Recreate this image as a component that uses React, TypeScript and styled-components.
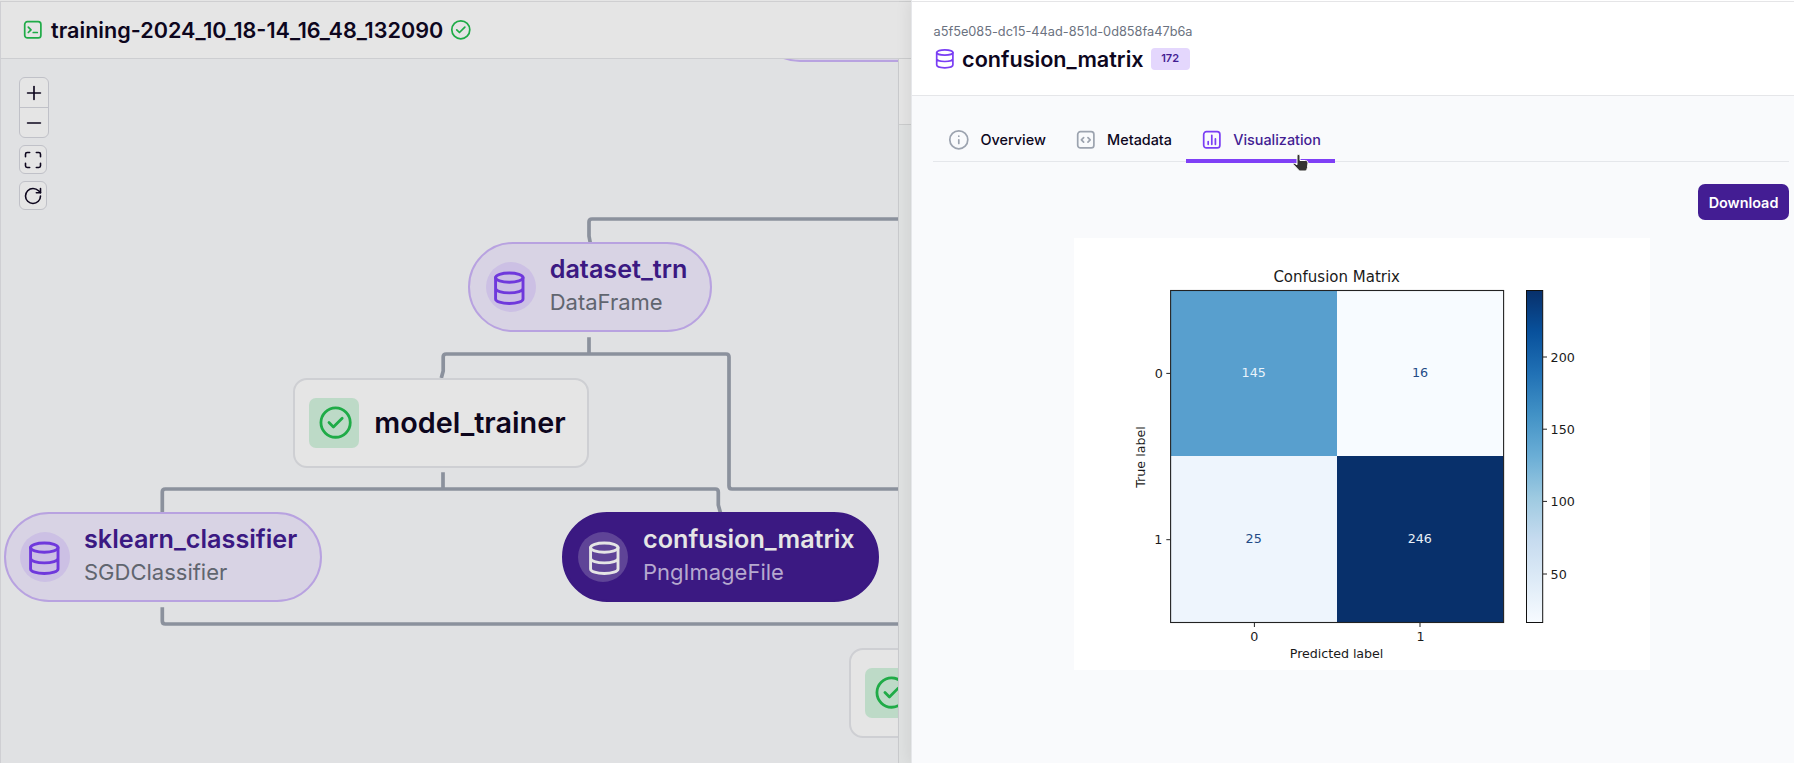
import React from 'react';
import styled, { createGlobalStyle } from 'styled-components';
import { Maximize, Minus, Plus, RotateCw } from 'lucide-react';

const GlobalStyle = createGlobalStyle`
  * { box-sizing: border-box; }
  body { margin: 0; font-family: Inter, "Liberation Sans", sans-serif; color: #0d061d; overflow: hidden; }
`;

const Page = styled.div`
  display: grid;
  grid-template-columns: 899px 12px 883px;
  height: 763px;
  background: #e5e5e5;
`;

/* ---------- Run view, dimmed behind the drawer ---------- */

const RunColumn = styled.div`
  display: flex;
  flex-direction: column;
  min-width: 0;
  min-height: 0;
`;

const TopLine = styled.div<{ $color: string }>`
  height: 2px;
  flex: none;
  border-bottom: 1px solid ${(p) => p.$color};
`;

const RunHeader = styled.header`
  display: flex;
  align-items: center;
  gap: 7px;
  height: 57px;
  flex: none;
  padding-left: 21px;
  border-left: 1px solid #cfcfd3;
  border-bottom: 1px solid #cdced1;
  color: #1fab47;
`;

const RunTitle = styled.h1`
  margin: 0 0 0 0.5px;
  font-size: 21.6px;
  line-height: 28px;
  font-weight: 600;
  color: #0d061d;
  white-space: nowrap;
`;

const Canvas = styled.main`
  position: relative;
  flex: 1;
  overflow: hidden;
  background: #e0e1e3;
  border-left: 1px solid #cfcfd3;
  border-right: 1px solid #c9cacd;
`;

const Controls = styled.div`
  display: flex;
  flex-direction: column;
  align-items: flex-start;
  gap: 7px;
  padding: 18px;
`;

const ControlGroup = styled.div<{ $size: number }>`
  display: flex;
  flex-direction: column;
  width: ${(p) => p.$size}px;
  border: 1px solid #c0c1c8;
  border-radius: 6px;
  background: #e5e5e5;
`;

const ControlButton = styled.button<{ $height: number }>`
  display: flex;
  align-items: center;
  justify-content: center;
  width: 100%;
  height: ${(p) => p.$height}px;
  padding: 0 1px 0 0;
  border: 0;
  background: transparent;
  color: #0d061d;
  & + & { border-top: 1px solid #c0c1c8; }
`;

const Edges = styled.svg`
  position: absolute;
  left: 0;
  top: 0;
  fill: none;
  stroke: #8b919d;
  stroke-width: 3.7px;
`;

const NodeBox = styled.div<{ $x: number; $y: number; $w: number }>`
  position: absolute;
  left: ${(p) => p.$x}px;
  top: ${(p) => p.$y}px;
  width: ${(p) => p.$w}px;
  height: 90px;
  display: flex;
  align-items: center;
  white-space: nowrap;
`;

const ArtifactBox = styled(NodeBox)<{ $selected?: boolean; $inset: number }>`
  gap: ${(p) => (p.$selected ? 15 : 14)}px;
  padding-left: ${(p) => p.$inset}px;
  border: 2px solid ${(p) => (p.$selected ? '#3b1982' : '#b8a2e0')};
  border-radius: 45px;
  background: ${(p) => (p.$selected ? '#3b1982' : '#d8d3e4')};
`;

const ArtifactIcon = styled.span<{ $selected?: boolean }>`
  display: grid;
  place-items: center;
  width: 50px;
  height: 50px;
  flex: none;
  border-radius: 50%;
  background: ${(p) => (p.$selected ? '#5f4497' : '#ccc0e4')};
  color: ${(p) => (p.$selected ? '#e5e5e5' : '#6f38dc')};
  svg { transform: translate(${(p) => (p.$selected ? 1 : -1)}px, 1px); }
`;

const ArtifactText = styled.div`
  padding-bottom: 4px;
`;

const ArtifactName = styled.div<{ $selected?: boolean }>`
  font-size: 25.2px;
  line-height: 34px;
  font-weight: 600;
  color: ${(p) => (p.$selected ? '#e5e5e5' : '#3b1982')};
`;

const ArtifactType = styled.div<{ $selected?: boolean }>`
  font-size: 22px;
  line-height: 32px;
  color: ${(p) => (p.$selected ? '#b6a9cf' : '#60656f')};
`;

const StepBox = styled(NodeBox)`
  gap: 15px;
  padding-left: 14px;
  border: 2px solid #cecfd3;
  border-radius: 14px;
  background: #e5e5e5;
  font-size: 28.8px;
  font-weight: 600;
`;

const StepIcon = styled.span`
  display: grid;
  place-items: center;
  width: 50px;
  height: 50px;
  flex: none;
  padding-left: 2px;
  border-radius: 7px;
  background: #bddac7;
  color: #1fab47;
`;

/* ---------- Strip of the side panel visible between canvas and drawer ---------- */

const SideStrip = styled.div`
  display: flex;
  flex-direction: column;
  background: #dfe1e1;
`;

const StripSection = styled.div<{ $height: number }>`
  height: ${(p) => p.$height}px;
  flex: none;
  background: #e5e5e5;
  border-bottom: 1px solid #cbcccd;
`;

/* ---------- Drawer ---------- */

const Drawer = styled.aside`
  position: relative;
  display: flex;
  flex-direction: column;
  border-left: 1px solid #e6e7ea;
  background: #f9fafc;
  box-shadow: 0 0 16px rgba(0, 0, 0, 0.09);
`;

const DrawerHeader = styled.header`
  height: 94px;
  padding: 20px 0 0 21.5px;
  border-bottom: 1px solid #e5e6e9;
  background: #fff;
`;

const DrawerTop = styled(TopLine)`
  background: #fff;
`;

const ArtifactId = styled.div`
  font-size: 12.75px;
  line-height: 19px;
  color: #6b7280;
`;

const DrawerTitleRow = styled.div`
  display: flex;
  align-items: center;
  height: 36px;
  color: #7a3ef4;
`;

const DrawerTitle = styled.h2`
  margin: 0 7px 0 7px;
  font-size: 21.6px;
  line-height: 28px;
  font-weight: 600;
  color: #0d061d;
`;

const Version = styled.span`
  width: 39px;
  height: 22px;
  border-radius: 4px;
  background: #e4d7fd;
  color: #431d93;
  font-size: 11px;
  font-weight: 600;
  line-height: 21px;
  text-align: center;
`;

const DrawerBody = styled.div`
  display: flex;
  flex-direction: column;
  padding: 22px 5px 0 21px;
`;

const Tabs = styled.nav`
  display: flex;
  height: 44px;
  border-bottom: 1px solid #e5e7eb;
`;

const Tab = styled.button<{ $active?: boolean }>`
  position: relative;
  display: flex;
  align-items: center;
  gap: 10.8px;
  height: 43px;
  padding: 0 13.6px 0 15.2px;
  border: 0;
  background: transparent;
  font: 500 14.4px Inter, sans-serif;
  color: ${(p) => (p.$active ? '#431d93' : '#0d061d')};
  svg { color: ${(p) => (p.$active ? '#7a3ef4' : '#9ca3af')}; }
  &::after {
    content: '';
    display: ${(p) => (p.$active ? 'block' : 'none')};
    position: absolute;
    left: 0;
    right: 0;
    bottom: -2px;
    height: 4px;
    background: #7f3ff6;
  }
`;

const Pointer = styled.svg`
  position: absolute;
  z-index: 1;
  left: 106px;
  top: 35px;
`;

const DownloadButton = styled.button`
  align-self: flex-end;
  width: 91px;
  height: 36px;
  margin-top: 22px;
  padding: 0;
  border: 0;
  border-radius: 7px;
  background: #431d93;
  color: #fff;
  font: 600 14.4px Inter, sans-serif;
`;

const Figure = styled.svg`
  align-self: center;
  flex: none;
  margin: 18px 0 0 2px;
  background: #fff;
  font-family: "DejaVu Sans", sans-serif;
  font-size: 12.7px;
  fill: #1a1a1a;
`;

type IconProps = { size?: number };

const GlyphSvg = styled.svg`
  flex: none;
`;

const Glyph = ({ size = 21.6, children }: IconProps & { children: React.ReactNode }) => (
  <GlyphSvg width={size} height={size} viewBox="0 0 24 24" fill="none" stroke="currentColor"
    strokeWidth={1.9} strokeLinecap="round" strokeLinejoin="round">
    {children}
  </GlyphSvg>
);

const DatabaseIcon = (p: IconProps) => (
  <Glyph {...p}>
    <ellipse cx="12" cy="5" rx="9" ry="3" />
    <path d="M3 5v14c0 1.66 4 3 9 3s9-1.34 9-3V5M21 12c0 1.66-4 3-9 3s-9-1.34-9-3" />
  </Glyph>
);
const CheckIcon = (p: IconProps) => (
  <Glyph {...p}><circle cx="12" cy="12" r="10" /><path d="M7.5 12l3 3 6-6" /></Glyph>
);
const TerminalIcon = () => (
  <Glyph><rect x="3" y="3" width="18" height="18" rx="3" /><path d="M7 9l3 3-3 3M12.5 15h4.5" /></Glyph>
);
const InfoIcon = () => (
  <Glyph><circle cx="12" cy="12" r="10" /><path d="M12 16v-4M12 8h.01" /></Glyph>
);
const CodeIcon = () => (
  <Glyph><rect x="3" y="3" width="18" height="18" rx="3" /><path d="M9.6 9.5L7.1 12l2.5 2.5M14.4 9.5l2.5 2.5-2.5 2.5" /></Glyph>
);
const ChartIcon = () => (
  <Glyph><rect x="3" y="3" width="18" height="18" rx="3" /><path d="M8 14v3M12 7v10M16 11v6" /></Glyph>
);

type ArtifactProps = { x: number; y: number; w: number; inset?: number; name?: string; type?: string; selected?: boolean };
const Artifact = ({ x, y, w, inset = 14, name, type, selected }: ArtifactProps) => (
  <ArtifactBox $x={x} $y={y} $w={w} $inset={inset} $selected={selected}>
    <ArtifactIcon $selected={selected}><DatabaseIcon size={36.6} /></ArtifactIcon>
    {name && (
      <ArtifactText>
        <ArtifactName $selected={selected}>{name}</ArtifactName>
        <ArtifactType $selected={selected}>{type}</ArtifactType>
      </ArtifactText>
    )}
  </ArtifactBox>
);

const blues = ['#08306b', '#08519c', '#2171b5', '#4292c6', '#6baed6', '#9ecae1', '#c6dbef', '#deebf7', '#f7fbff'];
const cells = [
  { x: 97, y: 52.5, w: 166, h: 165.5, fill: '#589fce', value: 145, color: '#e9f3fb', tx: 179.7, ty: 139 },
  { x: 263, y: 52.5, w: 166.5, h: 165.5, fill: '#f7fbff', value: 16, color: '#234a86', tx: 346, ty: 139 },
  { x: 97, y: 218, w: 166, h: 166.5, fill: '#eef5fd', value: 25, color: '#234a86', tx: 179.7, ty: 305 },
  { x: 263, y: 218, w: 166.5, h: 166.5, fill: '#08306b', value: 246, color: '#e9f0f8', tx: 345.8, ty: 305 },
];
const scale = [
  { label: 200, y: 119 },
  { label: 150, y: 191.2 },
  { label: 100, y: 263.4 },
  { label: 50, y: 336 },
];

const ConfusionMatrix = () => (
  <Figure width="576" height="432" viewBox="0 0 576 432">
    <defs>
      <linearGradient id="blues" x1="0" y1="0" x2="0" y2="1">
        {blues.map((c, i) => <stop key={c} offset={i / 8} stopColor={c} />)}
      </linearGradient>
    </defs>
    <text x="262.7" y="44" fontSize="15" textAnchor="middle">Confusion Matrix</text>
    {cells.map((c) => (
      <g key={c.value}>
        <rect x={c.x} y={c.y} width={c.w} height={c.h} fill={c.fill} />
        <text x={c.tx} y={c.ty} textAnchor="middle" fill={c.color}>{c.value}</text>
      </g>
    ))}
    <rect x="96.6" y="52.5" width="333" height="332" fill="none" stroke="#222" strokeWidth="1.1" />
    <rect x="452.5" y="52.5" width="16.2" height="332" fill="url(#blues)" stroke="#111" strokeWidth="1" />
    <path d="M92.3 135.4h4M92.3 301.7h4M180.4 385v4M346 385v4" stroke="#222" strokeWidth="1" />
    <text x="84.8" y="140" textAnchor="middle">0</text>
    <text x="84.4" y="306" textAnchor="middle">1</text>
    <text x="180.3" y="403" textAnchor="middle">0</text>
    <text x="346.6" y="403" textAnchor="middle">1</text>
    <text x="262.6" y="420.4" textAnchor="middle" textLength="93.5">Predicted label</text>
    <text transform="translate(71 219) rotate(-90)" textAnchor="middle">True label</text>
    {scale.map((s) => (
      <g key={s.label}>
        <path d={`M469 ${s.y}h4`} stroke="#222" strokeWidth="1" />
        <text x="476.6" y={s.y + 4.6}>{s.label}</text>
      </g>
    ))}
  </Figure>
);

export default function App() {
  return (
    <Page>
      <GlobalStyle />
      <RunColumn>
        <TopLine $color="#cfcfd1" />
        <RunHeader>
          <TerminalIcon />
          <RunTitle>training-2024_10_18-14_16_48_132090</RunTitle>
          <CheckIcon />
        </RunHeader>
        <Canvas>
          {/* view box is shifted so that edges share the page's coordinates */}
          <Edges width="897" height="704" viewBox="1 59 897 704">
            <path d="M898 219H592q-3 0-3 3V236L590.3 243" />
            <path d="M589 337.3V354M441.3 378L443.2 371V357q0-3 3-3H726q3 0 3 3V486q0 3 3 3H898" />
            <path d="M443 472.3V489M162.3 513V492q0-3 3-3H715.3q3 0 3 3V505L720.5 513" />
            <path d="M162.3 607.3V621q0 3 3 3H898" />
          </Edges>
          <Artifact x={754} y={-87} w={244} />
          <Artifact x={466.7} y={183.4} w={244} inset={16} name="dataset_trn" type="DataFrame" />
          <StepBox $x={292.3} $y={318.6} $w={296}>
            <StepIcon><CheckIcon size={35.2} /></StepIcon>model_trainer
          </StepBox>
          <Artifact x={3} y={453.4} w={318} name="sklearn_classifier" type="SGDClassifier" />
          <Artifact x={561} y={453.4} w={316.5} name="confusion_matrix" type="PngImageFile" selected />
          <StepBox $x={848.3} $y={588.6} $w={330}>
            <StepIcon><CheckIcon size={35.2} /></StepIcon>
          </StepBox>
          <Controls>
            <ControlGroup $size={30}>
              <ControlButton $height={29}><Plus size={22} strokeWidth={1.8} /></ControlButton>
              <ControlButton $height={30}><Minus size={22} strokeWidth={1.8} /></ControlButton>
            </ControlGroup>
            <ControlGroup $size={28}>
              <ControlButton $height={27}><Maximize size={20} strokeWidth={1.9} /></ControlButton>
            </ControlGroup>
            <ControlGroup $size={28}>
              <ControlButton $height={27}><RotateCw size={20} strokeWidth={1.9} /></ControlButton>
            </ControlGroup>
          </Controls>
        </Canvas>
      </RunColumn>
      <SideStrip>
        <StripSection $height={2} />
        <StripSection $height={57} />
        <StripSection $height={66} />
      </SideStrip>
      <Drawer>
        <DrawerTop $color="#e5e5e7" />
        <DrawerHeader>
          <ArtifactId>a5f5e085-dc15-44ad-851d-0d858fa47b6a</ArtifactId>
          <DrawerTitleRow>
            <DatabaseIcon />
            <DrawerTitle>confusion_matrix</DrawerTitle>
            <Version>172</Version>
          </DrawerTitleRow>
        </DrawerHeader>
        <DrawerBody>
          <Tabs>
            <Tab><InfoIcon />Overview</Tab>
            <Tab><CodeIcon />Metadata</Tab>
            <Tab $active>
              <ChartIcon />Visualization
              <Pointer width="18" height="20" viewBox="0 0 18 20">
                <path d="M6.5 1.5c.9 0 1.5.6 1.5 1.5v4.5h5.5c1.500 0 2.500 1 2.500 2.500l-.5 4.500c-.3 1.500-.8 2.500-1.500 3.500H7.500L1.300 11.500c0-1 .8-1.400 1.700-1l2 1.300V3c0-.9.6-1.500 1.500-1.500z"
                  fill="#333" stroke="#fff" strokeWidth="1" />
              </Pointer>
            </Tab>
          </Tabs>
          <DownloadButton>Download</DownloadButton>
          <ConfusionMatrix />
        </DrawerBody>
      </Drawer>
    </Page>
  );
}
